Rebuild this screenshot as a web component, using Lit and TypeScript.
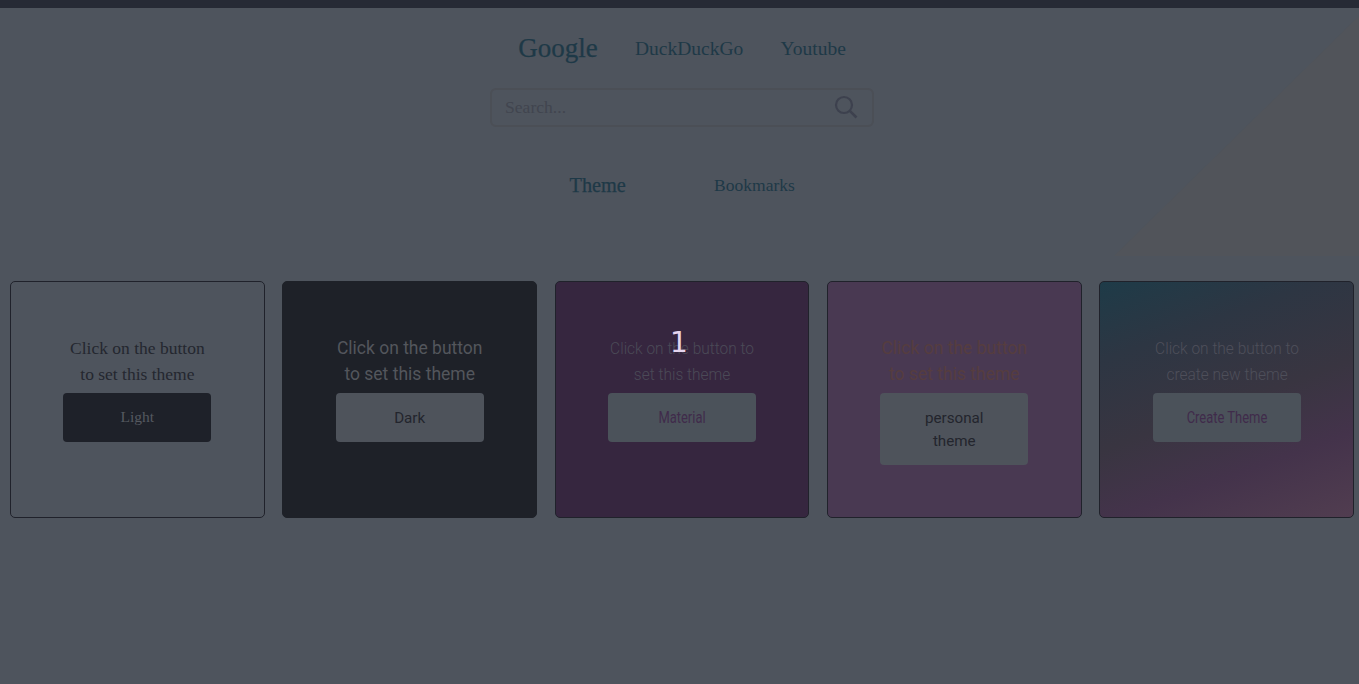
import { LitElement, html, css } from "lit";
import { customElement, property } from "lit/decorators.js";

@customElement("theme-card")
class ThemeCard extends LitElement {
  @property() kind = "light";
  @property({ attribute: false }) lines: string[] = [];
  @property({ attribute: false }) label: string[] = [];

  static styles = css`
    :host { display: block; min-width: 0; }
    .card {
      box-sizing: border-box; height: 237px; border: 1px solid #20222b; border-radius: 5px;
      padding-top: 53px; display: flex; flex-direction: column; align-items: center;
      text-align: center; font: 17.5px/26px "Roboto", sans-serif;
    }
    .copy { margin: 0 0 6px; }
    .line { display: block; white-space: nowrap; }
    .button {
      box-sizing: border-box; width: 148px; min-height: 49px; padding: 14px 10px 12px; border: 0;
      border-radius: 4px; background: #4e535b; color: #23252d; font: inherit; font-size: 15.2px; line-height: 23px;
    }
    .light { color: #24272f; font-family: "Liberation Serif", serif; font-size: 17.5px; }
    .light .button { padding: 12px 10px 14px; background: #1e2129; color: #555960; font-size: 15.5px; }
    .dark { background: #1e2128; border-color: #1e2128; color: #53565c; }
    .material { background: #36263f; color: #4b4a57; }
    .create { background: linear-gradient(160deg, #1e3b48 0%, #2d3643 24%, #393541 52%, #44334b 74%, #513d50 100%); color: #4e4f5a; }
    .personal { background: #493952; color: #563d3f; }
    .material .copy .line, .create .copy .line { font-weight: 300; font-size: 17px; transform: scaleX(.91); }
    .material .button, .create .button { padding: 13px 10px; color: #402b4b; background: #4b525a; }
    .material .button .line, .create .button .line { font-size: 16px; font-weight: 400; transform: scaleX(.81); margin: 0 -10px; }
  `;

  render() {
    const rows = (items: string[]) => items.map((t) => html`<span class="line">${t}</span>`);
    return html`<article class="card ${this.kind}">
      <p class="copy">${rows(this.lines)}</p>
      <button class="button">${rows(this.label)}</button>
    </article>`;
  }
}

const set = ["Click on the button", "to set this theme"];
const cards = [
  { kind: "light", lines: set, label: ["Light"] },
  { kind: "dark", lines: set, label: ["Dark"] },
  { kind: "material", lines: ["Click on the button to", "set this theme"], label: ["Material"] },
  { kind: "personal", lines: set, label: ["personal", "theme"] },
  { kind: "create", lines: ["Click on the button to", "create new theme"], label: ["Create Theme"] },
];

@customElement("app-root")
class AppRoot extends LitElement {
  static styles = css`
    :host {
      display: block; position: relative; box-sizing: border-box; height: 684px; overflow: hidden;
      border-top: 8px solid #262a35; background: #4e545d; font-family: "Liberation Serif", serif; color: #1e3947;
    }
    .facet { position: absolute; top: 8px; right: 0; width: 245px; height: 240px; background: #51545a; clip-path: polygon(100% 0, 100% 100%, 0 100%); }
    .page { position: relative; display: flex; flex-direction: column; }
    .engines { display: flex; justify-content: center; align-items: center; gap: 37.3px; height: 80px; padding-left: 5px; line-height: 80px; font-size: 19.5px; }
    .engines span { padding-top: 2px; }
    .engines .active { padding: 0; font-size: 27px; -webkit-text-stroke: .25px currentColor; }
    .search { box-sizing: border-box; width: 384px; height: 39px; margin-left: 490px; border: 2px solid #4b4f56; border-radius: 6px; display: flex; align-items: center; justify-content: space-between; padding: 0 14px 0 13px; color: #41454f; font-size: 17.6px; }
    .glass { width: 24px; height: 24px; margin-top: -1px; }
    .tabs { display: flex; align-items: center; height: 60px; margin-top: 28px; padding-left: 569.5px; gap: 88.3px; line-height: 60px; font-size: 17.5px; }
    .tabs .active { font-size: 20.3px; -webkit-text-stroke: .25px currentColor; }
    .cards { display: grid; grid-template-columns: repeat(5, 1fr); gap: 17.5px; padding: 66px 5px 0 10px; }
    .count { position: absolute; left: 670px; top: 319px; font: 28px/32px "DejaVu Sans", sans-serif; color: #e5d4ee; }
  `;

  render() {
    return html`
      <div class="facet"></div>
      <main class="page">
        <nav class="engines"><span class="active">Google</span><span>DuckDuckGo</span><span>Youtube</span></nav>
        <div class="search">
          <span>Search...</span>
          <svg class="glass" viewBox="0 0 24 24" fill="none" stroke="#3d414e" stroke-width="2.2">
            <circle cx="10" cy="10" r="8"></circle><path d="M15.8 15.8 22.5 22.5" stroke-width="2.6"></path>
          </svg>
        </div>
        <nav class="tabs"><span class="active">Theme</span><span>Bookmarks</span></nav>
        <section class="cards">
          ${cards.map((c) => html`<theme-card .kind=${c.kind} .lines=${c.lines} .label=${c.label}></theme-card>`)}
        </section>
      </main>
      <span class="count">1</span>
    `;
  }
}
